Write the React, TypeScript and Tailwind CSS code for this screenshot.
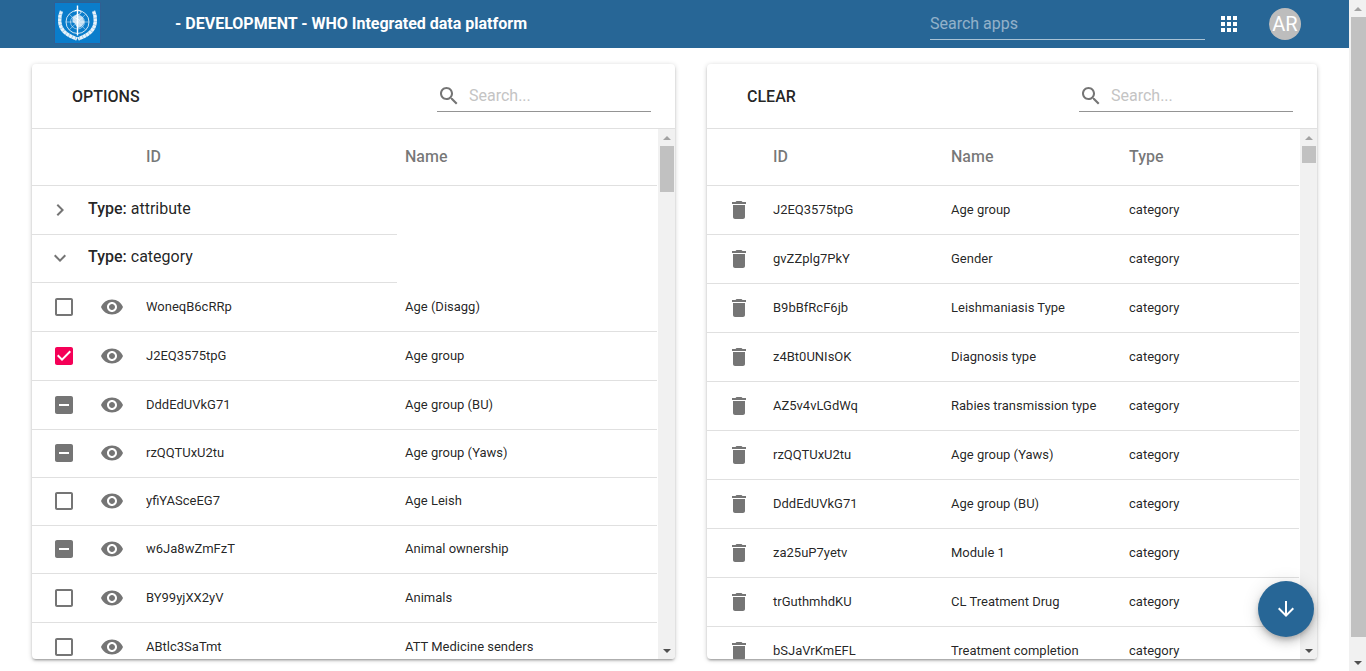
import React from 'react';

const P = {
  search: 'M15.5 14h-.79l-.28-.27C15.41 12.59 16 11.11 16 9.5 16 5.91 13.09 3 9.5 3S3 5.91 3 9.5 5.91 16 9.5 16c1.61 0 3.09-.59 4.23-1.57l.27.28v.79l5 4.99L20.49 19l-4.99-5zm-6 0C7.01 14 5 11.99 5 9.5S7.01 5 9.5 5 14 7.01 14 9.5 11.99 14 9.5 14z',
  eye: 'M12 4.5C7 4.5 2.73 7.61 1 12c1.73 4.39 6 7.5 11 7.5s9.27-3.11 11-7.5c-1.73-4.39-6-7.5-11-7.5zM12 17c-2.76 0-5-2.24-5-5s2.24-5 5-5 5 2.24 5 5-2.24 5-5 5zm0-8c-1.66 0-3 1.34-3 3s1.34 3 3 3 3-1.34 3-3-1.34-3-3-3z',
  trash: 'M6 19c0 1.1.9 2 2 2h8c1.1 0 2-.9 2-2V7H6v12zM19 4h-3.5l-1-1h-5l-1 1H5v2h14V4z',
  blank: 'M19 5v14H5V5h14m0-2H5c-1.1 0-2 .9-2 2v14c0 1.1.9 2 2 2h14c1.1 0 2-.9 2-2V5c0-1.1-.9-2-2-2z',
  checked: 'M19 3H5c-1.11 0-2 .9-2 2v14c0 1.1.89 2 2 2h14c1.11 0 2-.9 2-2V5c0-1.1-.89-2-2-2zm-9 14l-5-5 1.41-1.41L10 14.17l7.59-7.59L19 8l-9 9z',
  partial: 'M19 3H5c-1.1 0-2 .9-2 2v14c0 1.1.9 2 2 2h14c1.1 0 2-.9 2-2V5c0-1.1-.9-2-2-2zm-2 10H7v-2h10v2z',
  right: 'M10 6L8.59 7.41 13.17 12l-4.58 4.59L10 18l6-6z',
  down: 'M16.59 8.59L12 13.17 7.41 8.59 6 10l6 6 6-6z',
  apps: 'M4 8h4V4H4v4zm6 12h4v-4h-4v4zm-6 0h4v-4H4v4zm0-6h4v-4H4v4zm6 0h4v-4h-4v4zm6-10v4h4V4h-4zm-6 4h4V4h-4v4zm6 6h4v-4h-4v4zm0 6h4v-4h-4v4z',
  arrow: 'M20 12l-1.41-1.41L13 16.17V4h-2v12.17l-5.58-5.59L4 12l8 8 8-8z',
};

const Icon = ({ d, className = '' }: { d: string; className?: string }) => (
  <svg viewBox="0 0 24 24" className={`w-6 h-6 shrink-0 fill-current ${className}`}>
    <path d={d} />
  </svg>
);

const OPTIONS = [
  { id: 'WoneqB6cRRp', name: 'Age (Disagg)', box: 'blank', h: 'h-[49px]' },
  { id: 'J2EQ3575tpG', name: 'Age group', box: 'checked', h: 'h-[49px]' },
  { id: 'DddEdUVkG71', name: 'Age group (BU)', box: 'partial', h: 'h-[49px]' },
  { id: 'rzQQTUxU2tu', name: 'Age group (Yaws)', box: 'partial', h: 'h-[48px] pb-[2px]' },
  { id: 'yfiYASceEG7', name: 'Age Leish', box: 'blank', h: 'h-[48px] pb-[2px]' },
  { id: 'w6Ja8wZmFzT', name: 'Animal ownership', box: 'partial', h: 'h-[48px] pb-[2px]' },
  { id: 'BY99yjXX2yV', name: 'Animals', box: 'blank', h: 'h-[49px]' },
  { id: 'ABtlc3SaTmt', name: 'ATT Medicine senders', box: 'blank', h: 'h-[49px]' },
];

const SELECTED = [
  { id: 'J2EQ3575tpG', name: 'Age group' },
  { id: 'gvZZplg7PkY', name: 'Gender' },
  { id: 'B9bBfRcF6jb', name: 'Leishmaniasis Type' },
  { id: 'z4Bt0UNIsOK', name: 'Diagnosis type' },
  { id: 'AZ5v4vLGdWq', name: 'Rabies transmission type' },
  { id: 'rzQQTUxU2tu', name: 'Age group (Yaws)' },
  { id: 'DddEdUVkG71', name: 'Age group (BU)' },
  { id: 'za25uP7yetv', name: 'Module 1' },
  { id: 'trGuthmhdKU', name: 'CL Treatment Drug' },
  { id: 'bSJaVrKmEFL', name: 'Treatment completion' },
];

const WhoLogo = () => (
  <div className="w-[47px] h-[42px] ml-[54px] mb-[2px] bg-[#0a7dcb] border border-[#2f5f93]">
    <svg viewBox="0 0 45 40" className="w-full h-full" fill="none" stroke="#fff">
      <circle cx="22.5" cy="19" r="11.5" strokeWidth="1" opacity="0.8" />
      <circle cx="22.5" cy="19" r="7" strokeWidth="0.8" opacity="0.65" />
      <path d="M11 19h23M22.500 7.500v23M14.500 11.500l16 15M30.500 11.500l-16 15" strokeWidth="0.7" opacity="0.65" />
      <path d="M18 14c3-2 7-2 9 0s3 6 1 8-4 4-6 2-1-3-3-4-2-4-1-6z" fill="#fff" stroke="none" opacity="0.75" />
      <path d="M22.500 2.500v30" strokeWidth="1.400" />
      <path d="M19.500 8c2-1.500 4.500-1 6 0s0 3-2 3.500-4 1-3.500 3 4 1 4.500 3" strokeWidth="1" />
      <path d="M6.500 8c-3 6.500-2.500 15 2 20s9 6 13.500 8M38.500 8c3 6.500 2.500 15-2 20s-9 6-13.500 8" strokeWidth="3.400" opacity="0.9" />
      <path d="M6.500 8c-3 6.500-2.500 15 2 20s9 6 13.500 8M38.500 8c3 6.500 2.500 15-2 20s-9 6-13.500 8" strokeWidth="3.600" strokeDasharray="0.500 3" stroke="#0a7dcb" opacity="0.55" />
    </svg>
  </div>
);

const Scrollbar = ({ thumb, className = '' }: { thumb: string; className?: string }) => (
  <div className={`w-[17px] shrink-0 bg-[#f1f1f1] flex flex-col items-stretch ${className}`}>
    <div className="h-[17px] flex items-center justify-center">
      <div className="w-0 h-0 border-x-[4px] border-x-transparent border-b-[4px] border-b-[#a3a3a3]" />
    </div>
    <div className="flex-1 min-h-0">
      <div className={`ml-[2px] mr-px bg-[#c1c1c1] ${thumb}`} />
    </div>
    <div className="h-[17px] flex items-center justify-center">
      <div className="w-0 h-0 border-x-[4px] border-x-transparent border-t-[4px] border-t-[#505050]" />
    </div>
  </div>
);

const Toolbar = ({ title }: { title: string }) => (
  <div className="h-[65px] shrink-0 flex items-center border-b border-[#e0e0e0] pr-6">
    <div className="ml-10 mt-[2px] text-[16px] font-medium text-[#000000de]">{title}</div>
    <div className="ml-auto w-[214px] h-[32px] flex items-center border-b border-[#949494]">
      <Icon d={P.search} className="text-[#757575]" />
      <span className="ml-2 text-[16px] text-[#c4c4c4]">Search...</span>
    </div>
  </div>
);

export default function App() {
  return (
    <div className="h-[671px] flex overflow-hidden bg-white font-['Roboto',sans-serif] relative">
      <div className="flex-1 min-w-0">
        {/* App header */}
        <header className="h-12 bg-[#276696] flex items-center">
          <WhoLogo />
          <div className="ml-[74px] text-[16px] font-bold text-white whitespace-nowrap">- DEVELOPMENT - WHO Integrated data platform</div>
          <div className="ml-auto w-[275px] h-[32px] border-b border-[#ffffff99] text-[16px] text-[#ffffff80] leading-[31px]">Search apps</div>
          <Icon d={P.apps} className="ml-3 text-white" />
          <div className="ml-7 mr-12 w-8 h-8 rounded-full bg-[#bdbdbd] text-white text-[20px] flex items-center justify-center">AR</div>
        </header>

        <div className="flex gap-8 pl-8 pt-4">
          {/* Options */}
          <section className="w-[643px] h-[595px] rounded bg-white flex flex-col overflow-hidden shadow-[0_1px_5px_rgba(0,0,0,0.2),0_2px_2px_rgba(0,0,0,0.14),0_3px_1px_-2px_rgba(0,0,0,0.12)]">
            <Toolbar title="OPTIONS" />
            <div className="flex-1 min-h-0 flex">
              <div className="flex-1 min-w-0 overflow-hidden">
                <div className="h-[57px] mr-px flex items-center border-b border-[#e0e0e0] text-[16px] font-medium text-[#0000008a]">
                  <span className="w-[259px] ml-[114px]">ID</span>
                  <span>Name</span>
                </div>
                <div className="w-[365px] h-[49px] flex items-center border-b border-[#e0e0e0] text-[16px] text-[#000000de]">
                  <Icon d={P.right} className="ml-4 text-[#757575]" />
                  <span className="ml-4 mb-[2px]"><b className="font-medium">Type:</b> attribute</span>
                </div>
                <div className="w-[365px] h-[48px] pb-[2px] flex items-center border-b border-[#e0e0e0] text-[16px] text-[#000000de]">
                  <Icon d={P.down} className="ml-4 text-[#757575]" />
                  <span className="ml-4 mb-[2px]"><b className="font-medium">Type:</b> category</span>
                </div>
                {OPTIONS.map((o) => (
                  <div key={o.id} className={`${o.h} mr-px flex items-center border-b border-[#e0e0e0] text-[13px] text-[#000000de]`}>
                    <Icon d={P[o.box as keyof typeof P]} className={`ml-5 ${o.box === 'checked' ? 'text-[#f50057]' : 'text-[#757575]'}`} />
                    <Icon d={P.eye} className="ml-6 text-[#757575]" />
                    <span className="ml-[22px] w-[259px]">{o.id}</span>
                    <span>{o.name}</span>
                  </div>
                ))}
              </div>
              <Scrollbar thumb="h-[46px]" />
            </div>
          </section>

          {/* Selected */}
          <section className="w-[610px] h-[595px] rounded bg-white flex flex-col overflow-hidden shadow-[0_1px_5px_rgba(0,0,0,0.2),0_2px_2px_rgba(0,0,0,0.14),0_3px_1px_-2px_rgba(0,0,0,0.12)]">
            <Toolbar title="CLEAR" />
            <div className="flex-1 min-h-0 flex">
              <div className="flex-1 min-w-0 overflow-hidden">
                <div className="h-[57px] mr-px flex items-center border-b border-[#e0e0e0] text-[16px] font-medium text-[#0000008a]">
                  <span className="w-[178px] ml-[66px]">ID</span>
                  <span className="w-[178px]">Name</span>
                  <span>Type</span>
                </div>
                {SELECTED.map((s) => (
                  <div key={s.id} className="h-[49px] mr-px flex items-center border-b border-[#e0e0e0] text-[13px] text-[#000000de]">
                    <Icon d={P.trash} className="ml-5 text-[#757575]" />
                    <span className="ml-[22px] w-[178px]">{s.id}</span>
                    <span className="w-[178px] whitespace-nowrap">{s.name}</span>
                    <span>category</span>
                  </div>
                ))}
              </div>
              <Scrollbar thumb="h-[17px]" />
            </div>
          </section>
        </div>
      </div>

      <Scrollbar thumb="h-[620px] !mr-0" />

      {/* Floating action button */}
      <button className="absolute left-[1258px] top-[581px] w-14 h-14 rounded-full bg-[#276696] text-white flex items-center justify-center shadow-[0_3px_5px_-1px_rgba(0,0,0,0.2),0_6px_10px_0_rgba(0,0,0,0.14),0_1px_18px_0_rgba(0,0,0,0.12)]">
        <Icon d={P.arrow} />
      </button>
    </div>
  );
}
